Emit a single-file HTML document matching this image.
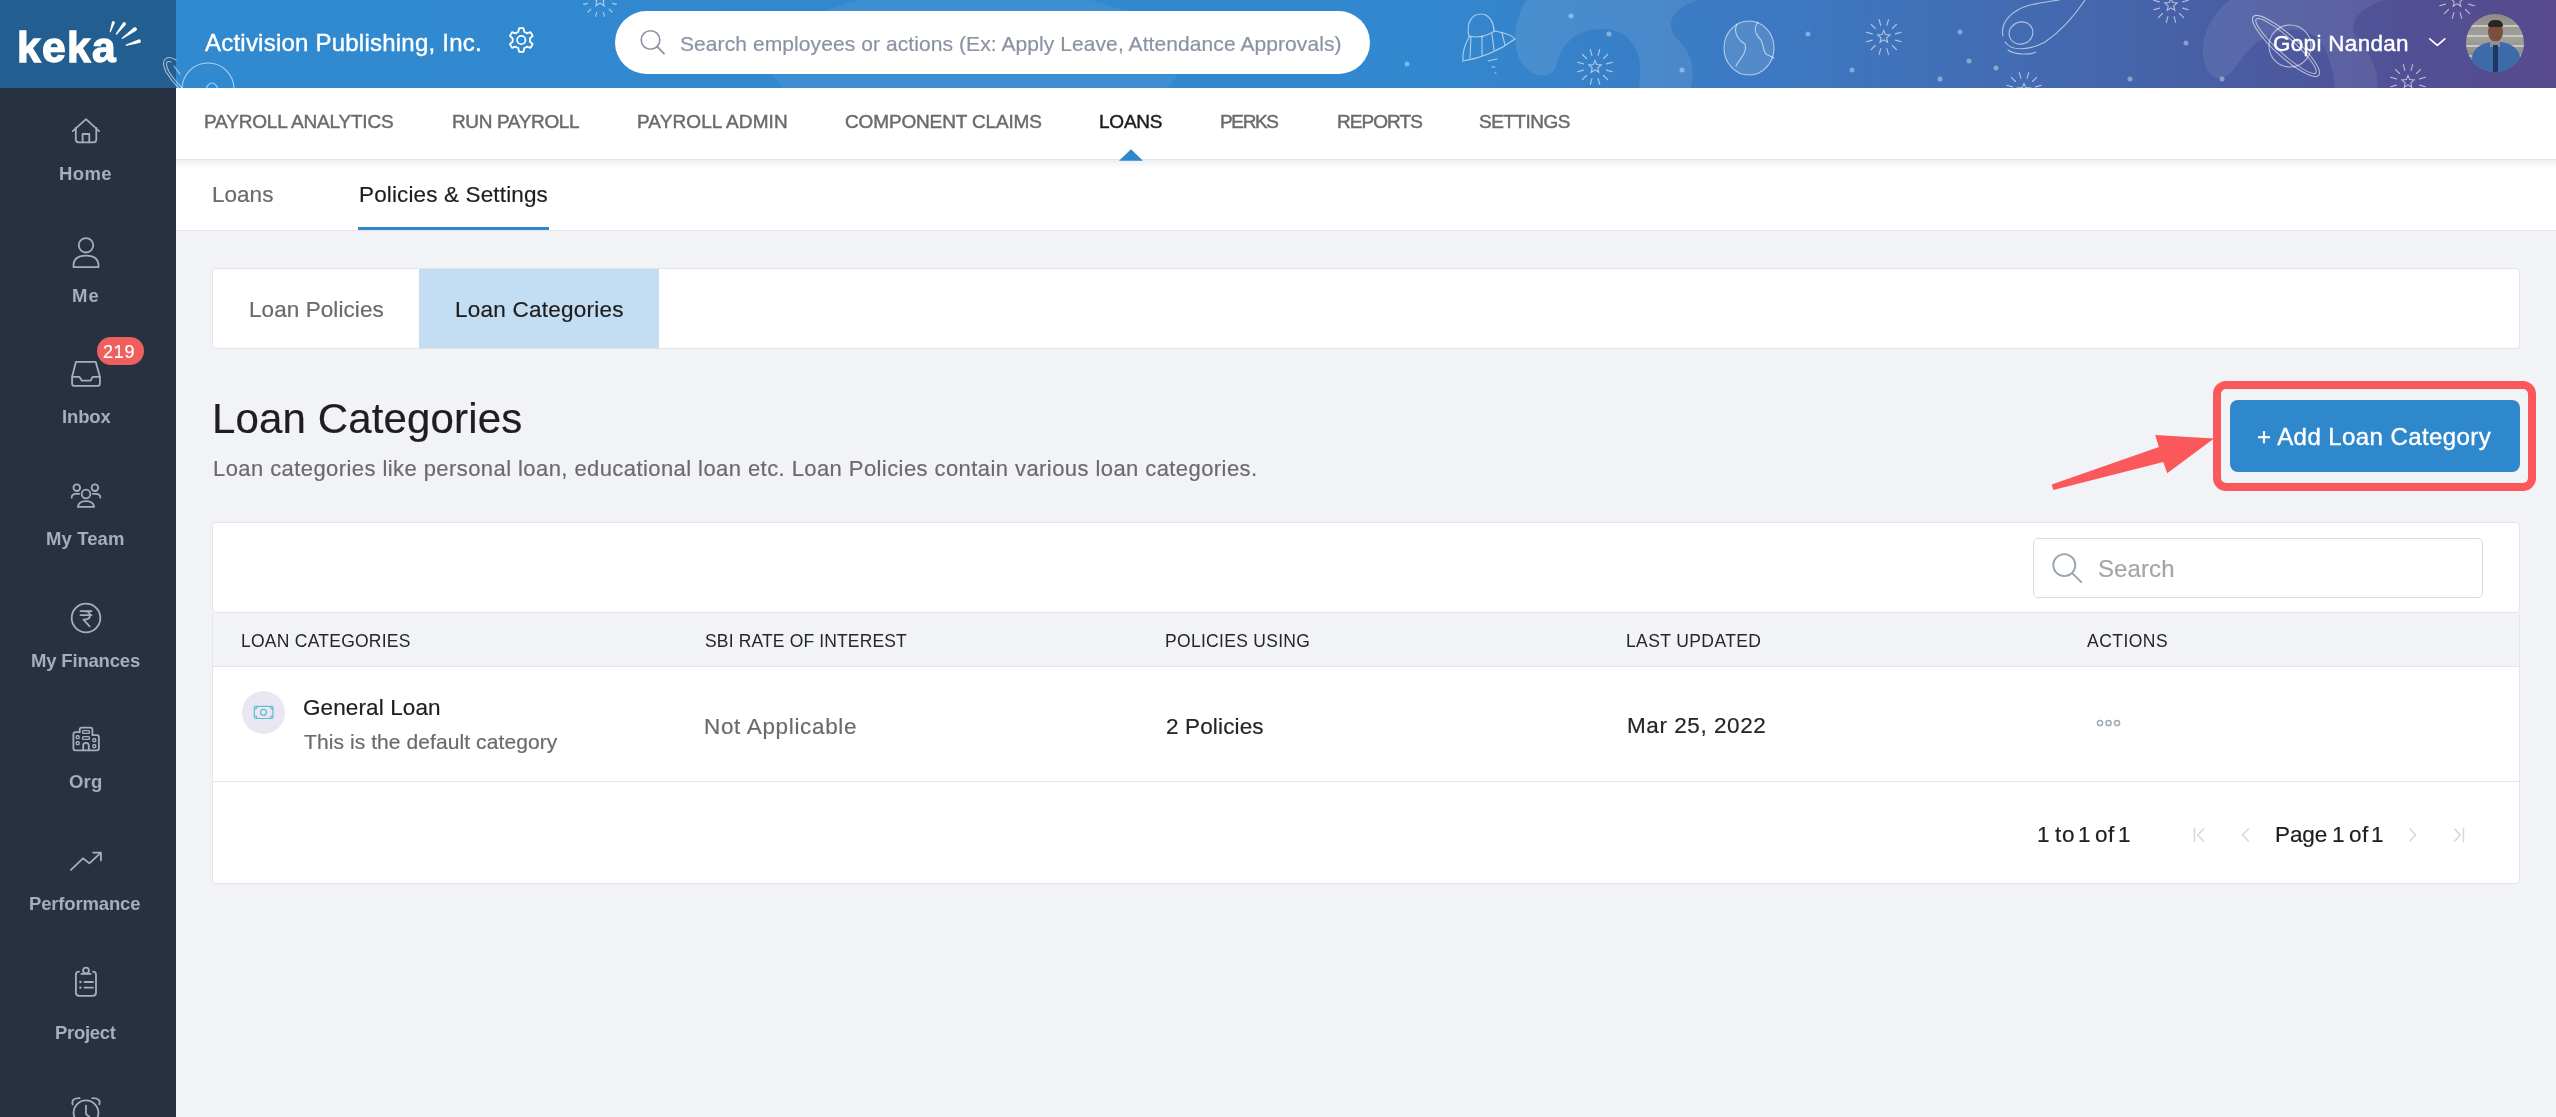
<!DOCTYPE html>
<html><head><meta charset="utf-8">
<style>
*{margin:0;padding:0;box-sizing:border-box}
html,body{width:2556px;height:1117px;overflow:hidden;background:#f2f3f7;font-family:"Liberation Sans",sans-serif;position:relative}
.t{position:absolute;white-space:nowrap;line-height:1;-webkit-text-stroke:0.2px currentColor;will-change:transform}
.sb{-webkit-text-stroke:0}
.b{position:absolute}
</style></head>
<body>
<div class="b" style="left:0;top:0;width:176px;height:1117px;background:#283142"></div>
<div class="b" style="left:0;top:0;width:176px;height:88px;background:#235e91"></div>
<div class="b" style="left:176px;top:0;width:2380px;height:88px;background:linear-gradient(90deg,#3189d0 0%,#3288cf 52%,#3d78c1 68%,#4565ab 82%,#524f94 94%,#574a8d 100%)"></div>
<!-- header decorations -->
<svg class="b" style="left:0;top:0" width="2556" height="88" viewBox="0 0 2556 88">
 <path d="M1527,0 C1512,20 1510,55 1528,70 C1538,78 1550,77 1556,68 C1560,45 1575,29 1602,29 C1628,29 1642,48 1640,75 L1639,88 L1691,88 C1695,68 1692,55 1680,42 C1662,25 1672,8 1698,0 Z" fill="#ffffff" opacity="0.09"/>
 <path d="M2230,0 C2210,15 2198,40 2205,65 C2210,80 2222,82 2232,72 C2245,55 2255,35 2290,30 C2320,28 2330,50 2335,88 L2377,88 C2380,70 2370,55 2355,35 C2348,20 2365,5 2385,0 Z" fill="#ffffff" opacity="0.08"/>
 <ellipse cx="975" cy="62" rx="205" ry="75" fill="#ffffff" opacity="0.06"/>
 <g fill="none" stroke="#ffffff" stroke-opacity="0.6" stroke-width="1.1" stroke-linecap="round">
  <path d="M1469,37 C1466,22 1472,14 1481,14 C1490,14 1494,24 1494,31"/>
  <path d="M1463,61 C1462,50 1466,42 1470,36 C1480,39 1490,34 1495,31 C1505,33 1513,36 1515,39 C1500,50 1482,58 1463,61 Z"/>
  <path d="M1471,37 L1470,58 M1482,36 L1482,55 M1492,34 L1494,50 M1502,33 L1505,45"/>
  <path d="M1488,61 L1497,59 M1492,67 L1495,67 M1495,73 L1496,73"/>
  <ellipse cx="1749" cy="48" rx="25" ry="27" fill="#ffffff" fill-opacity="0.12"/>
  <path d="M1737,24 C1733,32 1738,40 1745,44 C1748,52 1740,58 1736,66 M1758,22 C1752,30 1757,36 1761,40 C1765,48 1762,54 1770,56 L1774,58"/>
  <path d="M1595.0,60.5 L1596.7,64.6 L1601.2,65.0 L1597.8,67.9 L1598.8,72.3 L1595.0,69.9 L1591.2,72.3 L1592.2,67.9 L1588.8,65.0 L1593.3,64.6 Z M1606.6,70.1 L1612.4,71.7 M1603.5,75.5 L1607.7,79.7 M1598.1,78.6 L1599.7,84.4 M1591.9,78.6 L1590.3,84.4 M1586.5,75.5 L1582.3,79.7 M1583.4,70.1 L1577.6,71.7 M1583.4,63.9 L1577.6,62.3 M1586.5,58.5 L1582.3,54.3 M1591.9,55.4 L1590.3,49.6 M1598.1,55.4 L1599.7,49.6 M1603.5,58.5 L1607.7,54.3 M1606.6,63.9 L1612.4,62.3"/>
  <path d="M1883.8,30.5 L1885.5,34.6 L1890.0,35.0 L1886.6,37.9 L1887.6,42.3 L1883.8,39.9 L1880.0,42.3 L1881.0,37.9 L1877.6,35.0 L1882.1,34.6 Z M1895.4,40.1 L1901.2,41.7 M1892.3,45.5 L1896.5,49.7 M1886.9,48.6 L1888.5,54.4 M1880.7,48.6 L1879.1,54.4 M1875.3,45.5 L1871.1,49.7 M1872.2,40.1 L1866.4,41.7 M1872.2,33.9 L1866.4,32.3 M1875.3,28.5 L1871.1,24.3 M1880.7,25.4 L1879.1,19.6 M1886.9,25.4 L1888.5,19.6 M1892.3,28.5 L1896.5,24.3 M1895.4,33.9 L1901.2,32.3"/>
  <path d="M2024.0,83.5 L2025.7,87.6 L2030.2,88.0 L2026.8,90.9 L2027.8,95.3 L2024.0,92.9 L2020.2,95.3 L2021.2,90.9 L2017.8,88.0 L2022.3,87.6 Z M2035.6,93.1 L2041.4,94.7 M2032.5,98.5 L2036.7,102.7 M2027.1,101.6 L2028.7,107.4 M2020.9,101.6 L2019.3,107.4 M2015.5,98.5 L2011.3,102.7 M2012.4,93.1 L2006.6,94.7 M2012.4,86.9 L2006.6,85.3 M2015.5,81.5 L2011.3,77.3 M2020.9,78.4 L2019.3,72.6 M2027.1,78.4 L2028.7,72.6 M2032.5,81.5 L2036.7,77.3 M2035.6,86.9 L2041.4,85.3"/>
  <path d="M2408.0,75.5 L2409.7,79.6 L2414.2,80.0 L2410.8,82.9 L2411.8,87.3 L2408.0,84.9 L2404.2,87.3 L2405.2,82.9 L2401.8,80.0 L2406.3,79.6 Z M2419.6,85.1 L2425.4,86.7 M2416.5,90.5 L2420.7,94.7 M2411.1,93.6 L2412.7,99.4 M2404.9,93.6 L2403.3,99.4 M2399.5,90.5 L2395.3,94.7 M2396.4,85.1 L2390.6,86.7 M2396.4,78.9 L2390.6,77.3 M2399.5,73.5 L2395.3,69.3 M2404.9,70.4 L2403.3,64.6 M2411.1,70.4 L2412.7,64.6 M2416.5,73.5 L2420.7,69.3 M2419.6,78.9 L2425.4,77.3"/>
  <path d="M2457.0,-5.5 L2458.7,-1.4 L2463.2,-1.0 L2459.8,1.9 L2460.8,6.3 L2457.0,3.9 L2453.2,6.3 L2454.2,1.9 L2450.8,-1.0 L2455.3,-1.4 Z M2468.6,4.1 L2474.4,5.7 M2465.5,9.5 L2469.7,13.7 M2460.1,12.6 L2461.7,18.4 M2453.9,12.6 L2452.3,18.4 M2448.5,9.5 L2444.3,13.7 M2445.4,4.1 L2439.6,5.7 M2445.4,-2.1 L2439.6,-3.7 M2448.5,-7.5 L2444.3,-11.7 M2453.9,-10.6 L2452.3,-16.4 M2460.1,-10.6 L2461.7,-16.4 M2465.5,-7.5 L2469.7,-11.7 M2468.6,-2.1 L2474.4,-3.7"/>
  <path d="M2171.0,-1.5 L2172.7,2.6 L2177.2,3.0 L2173.8,5.9 L2174.8,10.3 L2171.0,7.9 L2167.2,10.3 L2168.2,5.9 L2164.8,3.0 L2169.3,2.6 Z M2182.6,8.1 L2188.4,9.7 M2179.5,13.5 L2183.7,17.7 M2174.1,16.6 L2175.7,22.4 M2167.9,16.6 L2166.3,22.4 M2162.5,13.5 L2158.3,17.7 M2159.4,8.1 L2153.6,9.7 M2159.4,1.9 L2153.6,0.3 M2162.5,-3.5 L2158.3,-7.7 M2167.9,-6.6 L2166.3,-12.4 M2174.1,-6.6 L2175.7,-12.4 M2179.5,-3.5 L2183.7,-7.7 M2182.6,1.9 L2188.4,0.3"/>
  <ellipse cx="2021" cy="33" rx="12" ry="11" transform="rotate(-20 2021 33)"/>
  <path d="M2003,36 C2000,22 2012,10 2030,5 C2045,2 2060,0 2085,-5 M2005,42 C2012,52 2030,50 2045,42 C2060,32 2075,15 2085,0 M2008,50 C2015,55 2030,55 2036,52"/>
  <circle cx="2290" cy="46" r="21"/>
  <ellipse cx="2286" cy="46" rx="44" ry="11" transform="rotate(42 2286 46)"/>
  <ellipse cx="2286" cy="46" rx="40" ry="8" transform="rotate(42 2286 46)"/>
  <circle cx="208" cy="89" r="26"/>
  <path d="M176,60 C166,54 160,60 166,72 C172,82 180,90 188,96 M171,62 C166,60 165,64 169,72 C174,80 180,86 186,92 M174,66 L180,74"/>
  <ellipse cx="212" cy="92" rx="6" ry="9"/>
  <path d="M600.0,-7.0 L601.9,-2.5 L606.7,-2.2 L603.0,1.0 L604.1,5.7 L600.0,3.1 L595.9,5.7 L597.0,1.0 L593.3,-2.2 L598.1,-2.5 Z M612.6,3.4 L616.4,4.4 M609.2,9.2 L612.0,12.0 M603.4,12.6 L604.4,16.4 M596.6,12.6 L595.6,16.4 M590.8,9.2 L588.0,12.0 M587.4,3.4 L583.6,4.4 M587.4,-3.4 L583.6,-4.4 M590.8,-9.2 L588.0,-12.0 M596.6,-12.6 L595.6,-16.4 M603.4,-12.6 L604.4,-16.4 M609.2,-9.2 L612.0,-12.0 M612.6,-3.4 L616.4,-4.4"/>
 </g>
 <g fill="#ffffff" opacity="0.38">
  <circle cx="1407" cy="64" r="2.5"/><circle cx="1571" cy="16" r="2.5"/><circle cx="1609" cy="34" r="2.5"/><circle cx="1682" cy="70" r="2.5"/>
  <circle cx="1808" cy="34" r="2.5"/><circle cx="1852" cy="70" r="2.5"/><circle cx="1960" cy="32" r="2.5"/><circle cx="1969" cy="61" r="2.5"/>
  <circle cx="1940" cy="79" r="2.5"/><circle cx="1996" cy="68" r="2.5"/><circle cx="2130" cy="79" r="2.5"/><circle cx="2186" cy="43" r="2.5"/><circle cx="2222" cy="79" r="2.5"/>
  <circle cx="1257" cy="64" r="2.5"/>
 </g>
</svg>
<!-- logo -->
<div class="t" style="left:17px;top:27px;font-size:42.5px;font-weight:bold;color:#fff;letter-spacing:1.4px;-webkit-text-stroke:1.3px #fff;line-height:1">keka</div>
<svg class="b" style="left:0;top:0" width="176" height="88"><g fill="#fff"><path d="M110.87,31.80 L114.82,23.09 A1.50,1.50 0 0 0 111.98,22.11 L109.73,31.40 A0.60,0.60 0 0 0 110.87,31.80 Z"/><path d="M116.91,34.40 L125.62,25.11 A1.80,1.80 0 0 0 122.78,22.89 L115.89,33.60 A0.65,0.65 0 0 0 116.91,34.40 Z"/><path d="M122.81,38.87 L136.17,30.82 A2.00,2.00 0 0 0 133.83,27.58 L121.99,37.73 A0.70,0.70 0 0 0 122.81,38.87 Z"/><path d="M126.61,45.87 L139.56,43.12 A1.90,1.90 0 0 0 138.44,39.48 L126.19,44.53 A0.70,0.70 0 0 0 126.61,45.87 Z"/></g></svg>
<!-- search pill -->
<div class="b" style="left:615px;top:11px;width:755px;height:63px;background:#fff;border-radius:32px"></div>
<svg class="b" style="left:630px;top:25px" width="45" height="35" viewBox="630 25 45 35">
 <circle cx="650.5" cy="40" r="9.3" fill="none" stroke="#8a93a3" stroke-width="1.6"/>
 <path d="M657.2,46.7 L664,53.6" stroke="#8a93a3" stroke-width="1.8" stroke-linecap="round"/>
</svg>
<!-- gear -->
<svg class="b" style="left:500px;top:20px" width="45" height="40" viewBox="500 20 45 40">
 <path d="M525.65,32.47 L524.28,31.82 L523.40,28.08 L519.20,28.08 L518.32,31.82 L516.95,32.47 L515.71,33.34 L512.03,32.22 L509.93,35.86 L512.73,38.49 L512.60,40.00 L512.73,41.51 L509.93,44.14 L512.03,47.78 L515.71,46.66 L516.95,47.53 L518.32,48.18 L519.20,51.92 L523.40,51.92 L524.28,48.18 L525.65,47.53 L526.89,46.66 L530.57,47.78 L532.67,44.14 L529.87,41.51 L530.00,40.00 L529.87,38.49 L532.67,35.86 L530.57,32.22 L526.89,33.34 Z" fill="none" stroke="#fff" stroke-width="1.8" stroke-linejoin="round"/>
 <circle cx="521.3" cy="40" r="4.2" fill="none" stroke="#fff" stroke-width="1.7"/>
</svg>
<!-- chevron -->
<svg class="b" style="left:2420px;top:30px" width="35" height="25" viewBox="2420 30 35 25">
 <path d="M2429.7,38.8 L2437.3,45.4 L2444.8,38.8" fill="none" stroke="#fff" stroke-width="1.7" stroke-linecap="round" stroke-linejoin="round"/>
</svg>
<!-- avatar -->
<div class="b" style="left:2466px;top:14px;width:58px;height:58px;border-radius:50%;overflow:hidden;background:linear-gradient(180deg,#8f8c86 0%,#a3a19c 40%,#7d7b78 100%)">
 <div class="b" style="left:0;top:11px;width:58px;height:2px;background:#c9c8c4"></div>
 <div class="b" style="left:0;top:21px;width:58px;height:2px;background:#c9c8c4"></div>
 <div class="b" style="left:0;top:31px;width:58px;height:2px;background:#c9c8c4"></div>
 <div class="b" style="left:0;top:41px;width:58px;height:2px;background:#bdbcb8"></div>
 <div class="b" style="left:22px;top:8px;width:15px;height:20px;border-radius:50%;background:#7a4f3c"></div>
 <div class="b" style="left:22px;top:6px;width:15px;height:7px;border-radius:8px 8px 2px 2px;background:#2b2420"></div>
 <div class="b" style="left:6px;top:28px;width:48px;height:36px;border-radius:45% 45% 0 0;background:#3d6aa8"></div>
 <div class="b" style="left:24px;top:27px;width:10px;height:6px;background:#8b8f98"></div>
 <div class="b" style="left:27px;top:31px;width:5px;height:27px;background:#1f3763"></div>
</div>
<!-- nav bar -->
<div class="b" style="left:176px;top:88px;width:2380px;height:70px;background:#fff"></div>
<div class="b" style="left:176px;top:158px;width:2380px;height:73px;background:#fff;border-bottom:1px solid #e2e5ea"></div>
<div class="b" style="left:176px;top:159px;width:2380px;height:1px;background:#e3e5ea"></div>
<div class="b" style="left:176px;top:160px;width:2380px;height:9px;background:linear-gradient(180deg,#eceef2,#f6f7f9 45%,#ffffff)"></div>
<svg class="b" style="left:1110px;top:145px" width="45" height="20" viewBox="1110 145 45 20">
 <path d="M1119,160.8 L1131,149.2 L1143,160.8 Z" fill="#2f87cc"/>
</svg>
<div class="b" style="left:358px;top:227px;width:191px;height:3px;background:#2f87cc"></div>

<!-- tab card -->
<div class="b" style="left:212px;top:268px;width:2308px;height:81px;background:#fff;border:1px solid #e1e4ea;border-radius:4px;overflow:hidden">
 <div class="b" style="left:206px;top:0;width:240px;height:80px;background:#c3ddf2"></div>
</div>

<!-- button + annotation -->
<div class="b" style="left:2230px;top:400px;width:290px;height:72px;background:#2f87cc;border-radius:8px"></div>
<div class="b" style="left:2213px;top:381px;width:323px;height:110px;border:8px solid #fb585c;border-radius:13px"></div>
<svg class="b" style="left:2040px;top:420px" width="185" height="85" viewBox="2040 420 185 85">
 <path d="M2051.7,484.5 L2158.9,447 L2155.2,435.1 L2214,438.4 L2167.2,473.2 L2163.3,461.9 L2053.3,490.1 Z" fill="#fb585c"/>
</svg>

<!-- table top card -->
<div class="b" style="left:212px;top:522px;width:2308px;height:91px;background:#fff;border:1px solid #e3e5ea;border-radius:4px"></div>
<div class="b" style="left:2033px;top:538px;width:450px;height:60px;border:1px solid #d6dbe4;border-radius:5px;background:#fff"></div>
<svg class="b" style="left:2045px;top:545px" width="45" height="45" viewBox="2045 545 45 45">
 <circle cx="2064.3" cy="565.1" r="11" fill="none" stroke="#9aa3b1" stroke-width="1.9"/>
 <path d="M2072.4,573.4 L2081.3,582.1" stroke="#9aa3b1" stroke-width="2" stroke-linecap="round"/>
</svg>
<!-- table -->
<div class="b" style="left:212px;top:613px;width:2308px;height:271px;background:#fff;border:1px solid #e3e5ea;border-top:none;border-radius:0 0 4px 4px;overflow:hidden">
 <div class="b" style="left:0;top:0;width:2308px;height:54px;background:#f2f3f7;border-bottom:1px solid #e3e5ea"></div>
 <div class="b" style="left:0;top:168px;width:2308px;height:1px;background:#e3e5ea"></div>
</div>
<!-- row icon -->
<div class="b" style="left:242px;top:691px;width:43px;height:43px;border-radius:50%;background:#ebe7f2"></div>
<svg class="b" style="left:250px;top:700px" width="28" height="25" viewBox="250 700 28 25">
 <g fill="none" stroke="#5cc0d0" stroke-width="1.2">
  <rect x="254.3" y="706.3" width="18.6" height="12.2" rx="1.2"/>
  <circle cx="263.5" cy="712.3" r="3"/>
  <path d="M254.3,709 A2.8,2.8 0 0 0 257.1,706.2 M270.3,706.2 A2.8,2.8 0 0 0 273.1,709 M273.1,715.8 A2.8,2.8 0 0 0 270.3,718.6 M257.1,718.6 A2.8,2.8 0 0 0 254.3,715.8"/>
 </g>
</svg>
<!-- dots -->
<svg class="b" style="left:2090px;top:715px" width="35" height="16" viewBox="2090 715 35 16">
 <g fill="none" stroke="#a0a8b5" stroke-width="1.5">
  <circle cx="2100" cy="723" r="2.6"/><circle cx="2108.5" cy="723" r="2.6"/><circle cx="2117" cy="723" r="2.6"/>
 </g>
</svg>
<!-- pagination icons -->
<svg class="b" style="left:2185px;top:820px" width="290" height="30" viewBox="2185 820 290 30">
 <g fill="none" stroke="#d6d6d6" stroke-width="1.5" stroke-linecap="round" stroke-linejoin="round">
  <path d="M2194.5,828.3 V841.6 M2203.5,829 L2197.5,835 L2203.5,841"/>
  <path d="M2248.3,829 L2242.5,835 L2248.3,841"/>
  <path d="M2410,829 L2415.6,835 L2410,841"/>
  <path d="M2454.8,829 L2460.3,835 L2454.8,841 M2463.5,828.3 V841.6"/>
 </g>
</svg>

<!-- sidebar icons -->
<svg class="b" style="left:0;top:88px" width="176" height="1029" viewBox="0 88 176 1029">
 <g fill="none" stroke="#a7aebb" stroke-width="1.8" stroke-linecap="round" stroke-linejoin="round">
  <path d="M72.8,131.1 L86,119.1 L99.1,131.1"/>
  <path d="M75.8,128 V139.6 Q75.8,142.3 78.5,142.3 H93.6 Q96.3,142.3 96.3,139.6 V128"/>
  <path d="M82.6,142.3 V134 H89.3 V142.3"/>
  <circle cx="86" cy="245.3" r="7.2"/>
  <path d="M73.5,267.2 Q72.8,255.6 86,255.6 Q99.2,255.6 98.5,267.2 Z"/>
  <path d="M75.9,361.9 H95.8 L99.9,376.8 V383.8 Q99.9,385.8 97.9,385.8 H74.1 Q72.1,385.8 72.1,383.8 V376.8 Z"/>
  <path d="M72.1,376.8 H79.3 L81.7,380.6 H90.6 L92.6,376.8 H99.9"/>
  <circle cx="76.8" cy="487.7" r="3.3"/><circle cx="94.9" cy="487.7" r="3.3"/><circle cx="86" cy="494" r="4.3"/>
  <path d="M71.6,497.6 Q71.8,493.8 76,493.8 H79.3 M100.4,497.6 Q100.2,493.8 96,493.8 H92.7"/>
  <path d="M77.9,506.9 Q78.5,501.1 86,501.1 Q93.5,501.1 94.1,506.9 Z"/>
  <circle cx="86" cy="618" r="14.3"/>
  <path d="M80.5,611.2 H91.5 M80.5,615.2 H91.5 M83.5,611.2 Q90,611.2 90,615.2 Q90,619.6 83.5,619.6 L89.6,626.3"/>
  <path d="M73.4,749 V734.2 Q73.4,732.2 75.4,732.2 H79.7 V729.7 Q79.7,727.7 81.7,727.7 H90.4 Q92.4,727.7 92.4,729.7 V735.2 H96.9 Q98.9,735.2 98.9,737.2 V748.3 Q98.9,750.3 96.9,750.3 H75.4 Q73.4,750.3 73.4,748.3 Z"/>
  <path d="M83.2,750.3 V745.5 Q83.2,742.8 86,742.8 Q88.8,742.8 88.8,745.5 V750.3"/>
  <path d="M70.9,869.8 L83,858.3 L89.4,863.4 L100.9,852.6 M93.2,852.6 H100.9 V860.3"/>
  <path d="M79,971.7 Q75.9,971.7 75.9,975 V992.5 Q75.9,995.8 79.2,995.8 H92.7 Q96,995.8 96,992.5 V975 Q96,971.7 93,971.7"/>
  <circle cx="86" cy="970.6" r="2.9"/>
  <path d="M81.3,973.9 H90.7"/>
  <path d="M84.5,982 H93 M84.5,987.6 H93"/>
  <circle cx="86" cy="1112.8" r="12.4"/>
  <path d="M72.6,1104.4 Q71,1098 79.6,1098.2 M99.4,1104.4 Q101,1098 92.4,1098.2"/>
  <path d="M86,1105.6 V1114 L89.8,1117.5"/>
 </g>
 <g fill="#a7aebb"><circle cx="80.4" cy="982" r="1.2"/><circle cx="80.4" cy="987.6" r="1.2"/></g>
 <g fill="none" stroke="#a7aebb" stroke-width="1.4">
  <rect x="76.3" y="735.8" width="2.8" height="2.8" rx="0.8"/><rect x="76.3" y="741.8" width="2.8" height="2.8" rx="0.8"/>
  <rect x="82.6" y="730.6" width="6.8" height="2.8" rx="0.8"/><rect x="82.6" y="736.6" width="6.8" height="2.8" rx="0.8"/>
  <rect x="92.9" y="738.8" width="2.8" height="2.8" rx="0.8"/><rect x="92.9" y="744.8" width="2.8" height="2.8" rx="0.8"/>
 </g>
</svg>
<!-- badge -->
<div class="b" style="left:97px;top:337px;width:47px;height:28px;border-radius:14px;background:#ef5f5e"></div>

<div class="t" style="left:205.2px;top:31px;font-size:24px;letter-spacing:0.223px;color:#ffffff;font-weight:normal;-webkit-text-stroke:0.4px currentColor;">Activision Publishing, Inc.</div>
<div class="t" style="left:680.0px;top:33px;font-size:21px;letter-spacing:0.083px;color:#8a93a3;font-weight:normal;">Search employees or actions (Ex: Apply Leave, Attendance Approvals)</div>
<div class="t" style="left:2273.0px;top:33px;font-size:22.5px;letter-spacing:0.3px;color:#ffffff;font-weight:normal;-webkit-text-stroke:0.4px currentColor;">Gopi Nandan</div>
<div class="t" style="left:204.3px;top:112px;font-size:19px;letter-spacing:-0.181px;color:#6b6b6b;font-weight:normal;-webkit-text-stroke:0.45px currentColor;">PAYROLL ANALYTICS</div>
<div class="t" style="left:451.5px;top:112px;font-size:19px;letter-spacing:-0.37px;color:#6b6b6b;font-weight:normal;-webkit-text-stroke:0.45px currentColor;">RUN PAYROLL</div>
<div class="t" style="left:637.2px;top:112px;font-size:19px;letter-spacing:0.092px;color:#6b6b6b;font-weight:normal;-webkit-text-stroke:0.45px currentColor;">PAYROLL ADMIN</div>
<div class="t" style="left:844.6px;top:112px;font-size:19px;letter-spacing:-0.147px;color:#6b6b6b;font-weight:normal;-webkit-text-stroke:0.45px currentColor;">COMPONENT CLAIMS</div>
<div class="t" style="left:1099.3px;top:112px;font-size:19px;letter-spacing:-0.225px;color:#1c1c1c;font-weight:normal;-webkit-text-stroke:0.45px currentColor;">LOANS</div>
<div class="t" style="left:1219.8px;top:112px;font-size:19px;letter-spacing:-1.35px;color:#6b6b6b;font-weight:normal;-webkit-text-stroke:0.45px currentColor;">PERKS</div>
<div class="t" style="left:1337.0px;top:112px;font-size:19px;letter-spacing:-0.933px;color:#6b6b6b;font-weight:normal;-webkit-text-stroke:0.45px currentColor;">REPORTS</div>
<div class="t" style="left:1479.4px;top:112px;font-size:19px;letter-spacing:-0.529px;color:#6b6b6b;font-weight:normal;-webkit-text-stroke:0.45px currentColor;">SETTINGS</div>
<div class="t" style="left:211.55px;top:184px;font-size:22.5px;letter-spacing:0.025px;color:#6b6b6b;font-weight:normal;">Loans</div>
<div class="t" style="left:359.35px;top:184px;font-size:22.5px;letter-spacing:0.139px;color:#1e1e1e;font-weight:normal;">Policies &amp; Settings</div>
<div class="t" style="left:248.85px;top:299px;font-size:22.5px;letter-spacing:0.075px;color:#6b6b6b;font-weight:normal;">Loan Policies</div>
<div class="t" style="left:455.35px;top:299px;font-size:22.5px;letter-spacing:0.25px;color:#1e1e1e;font-weight:normal;">Loan Categories</div>
<div class="t" style="left:211.6px;top:398px;font-size:42px;letter-spacing:0.143px;color:#1e1e1e;font-weight:normal;">Loan Categories</div>
<div class="t" style="left:212.95px;top:458px;font-size:22px;letter-spacing:0.424px;color:#6b6b6b;font-weight:normal;">Loan categories like personal loan, educational loan etc. Loan Policies contain various loan categories.</div>
<div class="t" style="left:2256.75px;top:425px;font-size:24px;letter-spacing:0.417px;color:#ffffff;font-weight:normal;-webkit-text-stroke:0.4px currentColor;">+ Add Loan Category</div>
<div class="t" style="left:2097.75px;top:557px;font-size:24px;letter-spacing:0.1px;color:#a6a6a6;font-weight:normal;">Search</div>
<div class="t sb" style="left:240.8px;top:633px;font-size:17.5px;letter-spacing:0.25px;color:#262626;font-weight:normal;">LOAN CATEGORIES</div>
<div class="t sb" style="left:704.8px;top:633px;font-size:17.5px;letter-spacing:0.147px;color:#262626;font-weight:normal;">SBI RATE OF INTEREST</div>
<div class="t sb" style="left:1165.3px;top:633px;font-size:17.5px;letter-spacing:0.3px;color:#262626;font-weight:normal;">POLICIES USING</div>
<div class="t sb" style="left:1625.6px;top:633px;font-size:17.5px;letter-spacing:0.391px;color:#262626;font-weight:normal;">LAST UPDATED</div>
<div class="t sb" style="left:2087.0px;top:633px;font-size:17.5px;letter-spacing:0.467px;color:#262626;font-weight:normal;">ACTIONS</div>
<div class="t" style="left:303.0px;top:697px;font-size:22.5px;letter-spacing:0.109px;color:#1e1e1e;font-weight:normal;">General Loan</div>
<div class="t" style="left:304.0px;top:731px;font-size:21px;letter-spacing:0.085px;color:#6b6b6b;font-weight:normal;">This is the default category</div>
<div class="t" style="left:703.95px;top:716px;font-size:22.5px;letter-spacing:0.669px;color:#6b6b6b;font-weight:normal;">Not Applicable</div>
<div class="t" style="left:1165.5px;top:716px;font-size:22.5px;letter-spacing:0.144px;color:#262626;font-weight:normal;">2 Policies</div>
<div class="t" style="left:1626.6px;top:715px;font-size:22.5px;letter-spacing:0.564px;color:#262626;font-weight:normal;">Mar 25, 2022</div>
<div class="t" style="left:2037.35px;top:824px;font-size:22.5px;letter-spacing:0.0px;color:#1e1e1e;font-weight:normal;">1</div>
<div class="t" style="left:2054.6px;top:824px;font-size:22.5px;letter-spacing:0.8px;color:#1e1e1e;font-weight:normal;">to</div>
<div class="t" style="left:2077.5px;top:824px;font-size:22.5px;letter-spacing:0.0px;color:#1e1e1e;font-weight:normal;">1</div>
<div class="t" style="left:2094.65px;top:824px;font-size:22.5px;letter-spacing:0.6px;color:#1e1e1e;font-weight:normal;">of</div>
<div class="t" style="left:2117.55px;top:824px;font-size:22.5px;letter-spacing:0.0px;color:#1e1e1e;font-weight:normal;">1</div>
<div class="t" style="left:2275.4px;top:824px;font-size:22.5px;letter-spacing:-0.1px;color:#1e1e1e;font-weight:normal;">Page</div>
<div class="t" style="left:2331.55px;top:824px;font-size:22.5px;letter-spacing:0.0px;color:#1e1e1e;font-weight:normal;">1</div>
<div class="t" style="left:2348.55px;top:824px;font-size:22.5px;letter-spacing:0.6px;color:#1e1e1e;font-weight:normal;">of</div>
<div class="t" style="left:2371.15px;top:824px;font-size:22.5px;letter-spacing:0.0px;color:#1e1e1e;font-weight:normal;">1</div>
<div class="t" style="left:103.4px;top:343px;font-size:18px;letter-spacing:0.75px;color:#ffffff;font-weight:normal;">219</div>
<div class="t sb" style="left:59.4px;top:165px;font-size:18.5px;letter-spacing:0.4px;color:#a7aebb;font-weight:bold;">Home</div>
<div class="t sb" style="left:71.8px;top:287px;font-size:18.5px;letter-spacing:1.0px;color:#a7aebb;font-weight:bold;">Me</div>
<div class="t sb" style="left:61.6px;top:408px;font-size:18.5px;letter-spacing:-0.15px;color:#a7aebb;font-weight:bold;">Inbox</div>
<div class="t sb" style="left:46.4px;top:530px;font-size:18.5px;letter-spacing:0.1px;color:#a7aebb;font-weight:bold;">My Team</div>
<div class="t sb" style="left:30.7px;top:652px;font-size:18.5px;letter-spacing:-0.18px;color:#a7aebb;font-weight:bold;">My Finances</div>
<div class="t sb" style="left:69.25px;top:773px;font-size:18.5px;letter-spacing:0.15px;color:#a7aebb;font-weight:bold;">Org</div>
<div class="t sb" style="left:29.3px;top:895px;font-size:18.5px;letter-spacing:-0.16px;color:#a7aebb;font-weight:bold;">Performance</div>
<div class="t sb" style="left:55.0px;top:1024px;font-size:18.5px;letter-spacing:-0.283px;color:#a7aebb;font-weight:bold;">Project</div>
</body></html>
